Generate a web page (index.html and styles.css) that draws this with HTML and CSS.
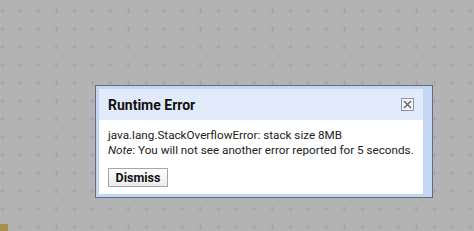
FILE: index.html
```html
<!DOCTYPE html>
<html>
<head>
<meta charset="utf-8">
<link rel="stylesheet" href="styles.css">
</head>
<body>
<div class="canvas">
  <svg class="grid" width="474" height="231" xmlns="http://www.w3.org/2000/svg">
    <defs>
      <pattern id="plus" x="-7" y="2" width="18" height="18" patternUnits="userSpaceOnUse">
        <path d="M7 9h5M9.5 6.5v5" stroke="#a4a4a4" stroke-width="1"/>
      </pattern>
    </defs>
    <rect width="474" height="231" fill="url(#plus)"/>
  </svg>
  <div class="corner"></div>
  <div class="dialog">
    <div class="inner">
      <div class="header">
        <span class="title">Runtime Error</span>
        <span class="close">
          <svg width="9" height="9" viewBox="0 0 9 9"><path d="M1 1L8 8M8 1L1 8" stroke="#6a6a6a" stroke-width="1.6"/></svg>
        </span>
      </div>
      <div class="body">
        <p class="msg">java.lang.StackOverflowError: stack size 8MB<br><em>Note</em>: You will not see another error reported for 5 seconds.</p>
        <div class="actions"><button class="btn">Dismiss</button></div>
      </div>
    </div>
  </div>
</div>
</body>
</html>
```
FILE: styles.css
```css
html, body {
  margin: 0;
  padding: 0;
}
body {
  width: 474px;
  height: 231px;
  overflow: hidden;
  background: #b3b3b3;
  font-family: Roboto, "Liberation Sans", Arial, sans-serif;
}
.canvas {
  position: relative;
  width: 474px;
  height: 231px;
}
.grid {
  position: absolute;
  left: 0;
  top: 0;
}
.corner {
  position: absolute;
  left: 0;
  top: 224px;
  width: 8px;
  height: 7px;
  background: #a88f4c;
}
.dialog {
  position: absolute;
  left: 95px;
  top: 85px;
  width: 330px;
  height: 105px;
  border: 1px solid #5f6d84;
  background: #c4d6f2;
  padding: 3px;
  box-sizing: content-box;
}
.inner {
  display: flex;
  flex-direction: column;
  height: 105px;
  width: 324px;
}
.header {
  flex-shrink: 0;
  height: 31px;
  background: #e1eafa;
  display: flex;
  align-items: center;
  justify-content: space-between;
  padding: 0 9px 0 9px;
}
.title {
  font-size: 14px;
  font-weight: bold;
  color: #111;
}
.close {
  width: 11px;
  height: 11px;
  border: 1px solid #8a96a8;
  background: #f4f7fc;
  display: flex;
  align-items: center;
  justify-content: center;
  margin-top: -1px;
}
.body {
  flex: 1;
  background: #fff;
  padding: 8px 9px 0 9px;
}
.msg {
  margin: 0;
  font-size: 11.7px;
  line-height: 15px;
  color: #222;
  white-space: nowrap;
}
.actions {
  margin-top: 9px;
}
.btn {
  font-family: Roboto, "Liberation Sans", Arial, sans-serif;
  font-size: 12.5px;
  font-weight: bold;
  color: #111;
  width: 60px;
  height: 19px;
  padding: 0;
  border: 1px solid #a5a5a5;
  border-radius: 0;
  background: linear-gradient(#fdfdfd, #ececec);
  line-height: 17px;
}
```
